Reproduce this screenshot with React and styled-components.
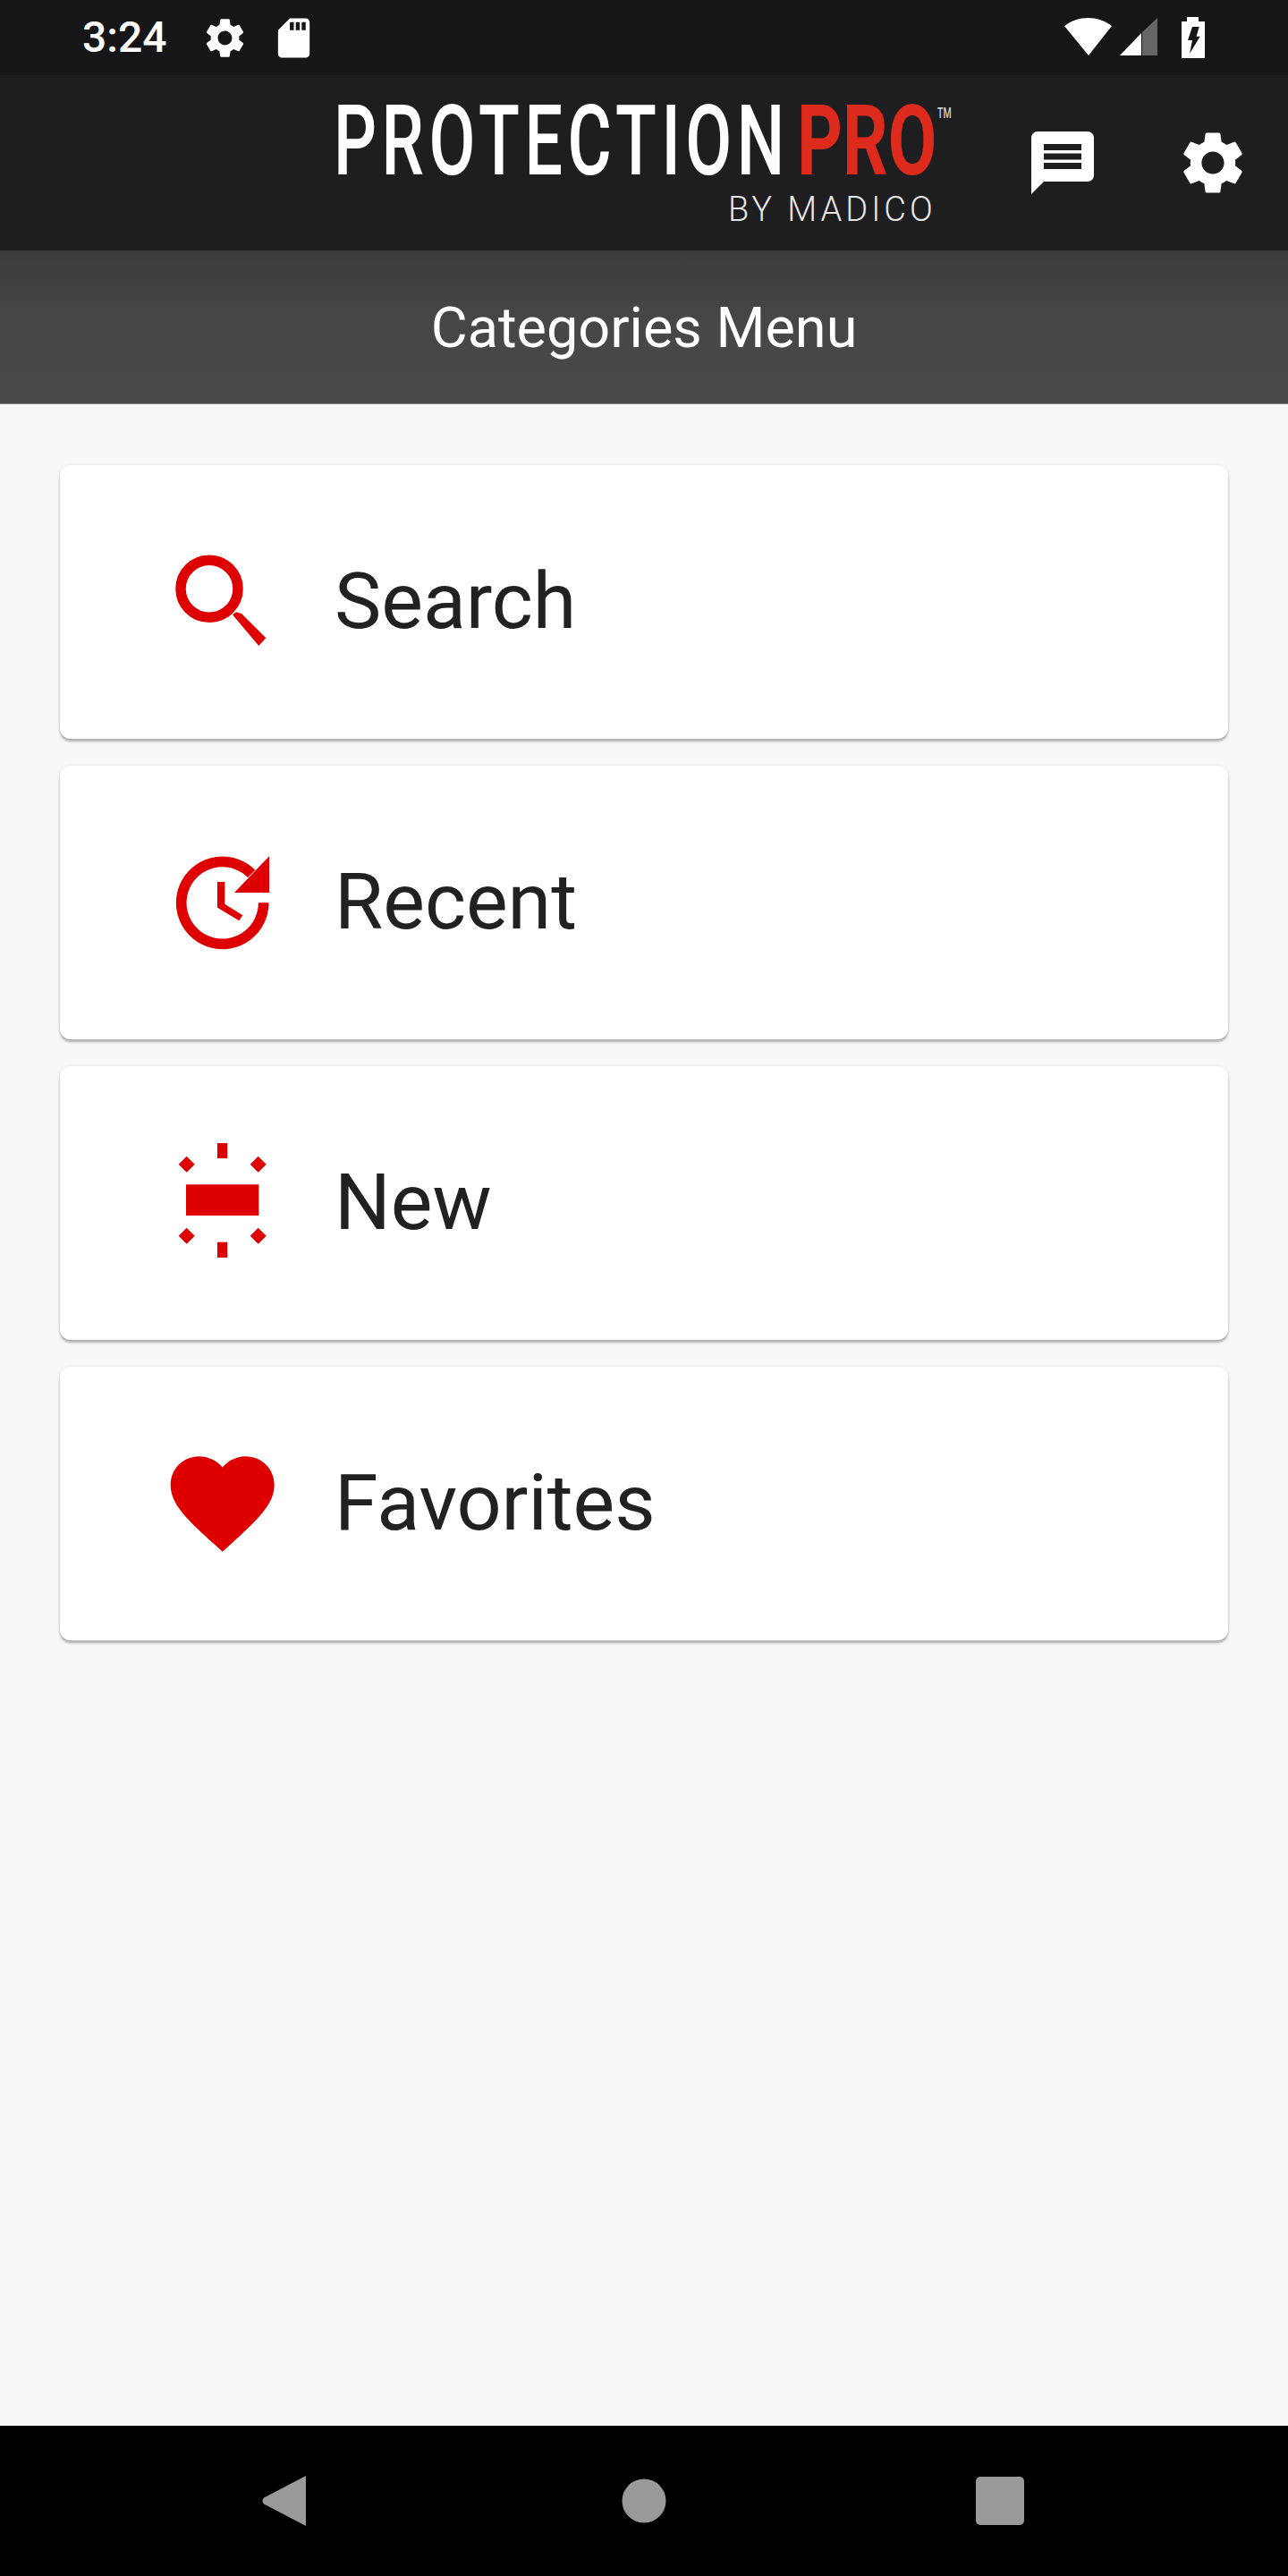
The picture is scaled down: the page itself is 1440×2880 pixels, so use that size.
import React from "react";
import styled, { createGlobalStyle } from "styled-components";

const GEAR =
  "M19.14 12.94c.04-.3.06-.61.06-.94 0-.32-.02-.64-.07-.94l2.03-1.58c.18-.14.23-.41.12-.61l-1.92-3.32c-.12-.22-.37-.29-.59-.22l-2.39.96c-.5-.38-1.03-.7-1.62-.94l-.36-2.54c-.04-.24-.24-.41-.48-.41h-3.84c-.24 0-.43.17-.47.41l-.36 2.54c-.59.24-1.13.57-1.62.94l-2.39-.96c-.22-.08-.47 0-.59.22L2.74 8.87c-.12.21-.08.47.12.61l2.03 1.58c-.05.3-.09.63-.09.94s.02.64.07.94l-2.03 1.58c-.18.14-.23.41-.12.61l1.92 3.32c.12.22.37.29.59.22l2.39-.96c.5.38 1.03.7 1.62.94l.36 2.54c.05.24.24.41.48.41h3.84c.24 0 .44-.17.47-.41l.36-2.54c.59-.24 1.13-.56 1.62-.94l2.39.96c.22.08.47 0 .59-.22l1.92-3.32c.12-.22.07-.47-.12-.61l-2.01-1.58zM12 15.6c-1.98 0-3.6-1.62-3.6-3.6s1.62-3.6 3.6-3.6 3.6 1.62 3.6 3.6-1.62 3.6-3.6 3.6z";
const MESSAGE =
  "M20 2H4c-1.1 0-1.99.9-1.99 2L2 22l4-4h14c1.1 0 2-.9 2-2V4c0-1.1-.9-2-2-2zm-2 12H6v-2h12v2zm0-3H6V9h12v2zm0-3H6V6h12v2z";
const SD_CARD =
  "M18 2h-8L4.02 8 4 20c0 1.1.9 2 2 2h12c1.1 0 2-.9 2-2V4c0-1.1-.9-2-2-2zm-6 6h-2V4h2v4zm3 0h-2V4h2v4zm3 0h-2V4h2v4z";
const HEART =
  "M12 21.35l-1.45-1.32C5.4 15.36 2 12.28 2 8.5 2 5.42 4.42 3 7.5 3c1.74 0 3.41.81 4.5 2.09C13.09 3.81 14.76 3 16.5 3 19.58 3 22 5.42 22 8.5c0 3.78-3.4 6.86-8.55 11.54L12 21.35z";

const RED = "#de0000";

const Global = createGlobalStyle`
  html, body {
    margin: 0;
    padding: 0;
    background: #f8f8f8;
    font-family: Roboto, "Liberation Sans", sans-serif;
  }
`;

const Page = styled.div`
  width: 1440px;
  height: 2880px;
  display: flex;
  flex-direction: column;
  background: #f8f8f8;
`;

const StatusBar = styled.div`
  height: 84px;
  flex: none;
  display: flex;
  align-items: center;
  background: #161618;
  padding: 0 93px 0 92px;
  box-sizing: border-box;
`;

const Clock = styled.span`
  font-size: 48px;
  font-weight: 500;
  color: #fff;
  line-height: 84px;
  width: 133px;
`;

const StatusIcon = styled.svg`
  display: block;
  flex: none;
  width: ${({ $w }) => $w || 53}px;
  height: ${({ $h }) => $h || 53}px;
  margin-left: ${({ $ml }) => $ml || 0}px;
  fill: #fff;
`;

const Spacer = styled.div`
  flex: 1;
`;

const Toolbar = styled.div`
  height: 196px;
  flex: none;
  display: flex;
  align-items: center;
  background: #1e1e20;
  padding-left: 370px;
  box-sizing: border-box;
`;

const LogoArt = styled.svg`
  display: block;
  flex: none;
  width: 700px;
  height: 140px;
  align-self: flex-start;
  margin-top: 26px;
  font-family: Roboto, sans-serif;
`;

const ToolIcon = styled.svg`
  display: block;
  flex: none;
  width: 84px;
  height: 84px;
  margin-left: ${({ $ml }) => $ml}px;
  fill: #fff;
`;

const TitleBar = styled.div`
  height: 172px;
  flex: none;
  display: flex;
  align-items: center;
  justify-content: center;
  box-sizing: border-box;
  padding-top: 2px;
  background: linear-gradient(#3c3c3c, #474747 50%, #484848);
  border-bottom: 1px solid #8a8a8a;
  color: #fff;
  font-size: 63px;
`;

const Menu = styled.main`
  flex: 1;
  display: flex;
  flex-direction: column;
  gap: 30px;
  padding: 68px 67px 0 67px;
`;

const Card = styled.div`
  height: 306px;
  display: flex;
  align-items: center;
  background: #fff;
  border-radius: 12px;
  box-shadow: 0 3px 3px rgba(0, 0, 0, 0.28), 0 0 4px rgba(0, 0, 0, 0.08);
  padding-left: 121px;
`;

const IconSlot = styled.svg`
  display: block;
  flex: none;
  width: 120px;
  height: 140px;
  fill: ${RED};
`;

const Label = styled.span`
  margin: 0 0 4px 66px;
  font-size: 88px;
  color: #212121;
`;

const NavBar = styled.div`
  height: 168px;
  flex: none;
  display: flex;
  align-items: center;
  justify-content: center;
  gap: 340px;
  background: #000;
`;

const NavKey = styled.svg`
  display: block;
  width: 60px;
  height: 60px;
  fill: #9a9a9a;
`;

const SearchIcon = () => (
  <IconSlot viewBox="0 -10 120 140">
    <circle cx="46" cy="45.3" r="32" fill="none" stroke={RED} strokeWidth="11.5" />
    <path d="M72 74.3L76 71.3 82 73 109.3 100.3 101.3 109z" />
  </IconSlot>
);

const RecentIcon = () => (
  <IconSlot viewBox="0 -10 120 140">
    <path
      d="M93.2 27.8A46 46 0 1 0 106.7 60.3"
      fill="none"
      stroke={RED}
      strokeWidth="11.7"
    />
    <path d="M113 8.3V49H74z" />
    <path d="M55 37H63.3V61.7L83.3 74.3 79.3 80.3 55 65.7z" />
  </IconSlot>
);

const NewIcon = () => (
  <IconSlot viewBox="0 -10 120 140">
    <rect x="20" y="39.3" width="81.3" height="34.7" />
    <rect x="55" y="-7" width="11.3" height="17" />
    <rect x="55" y="103.7" width="11.3" height="17.3" />
    <path d="M20.7 7.7l9 9-9 9-9-9z" />
    <path d="M100.7 7.7l9 9-9 9-9-9z" />
    <path d="M20.7 87.7l9 9-9 9-9-9z" />
    <path d="M100.7 87.7l9 9-9 9-9-9z" />
  </IconSlot>
);

const HeartIcon = () => (
  <IconSlot viewBox="0 -10 120 140">
    <path d={HEART} transform="translate(-8.9 -10.1) scale(5.8)" />
  </IconSlot>
);

const items = [
  { label: "Search", Icon: SearchIcon },
  { label: "Recent", Icon: RecentIcon },
  { label: "New", Icon: NewIcon },
  { label: "Favorites", Icon: HeartIcon },
];

const App = () => (
  <Page>
    <Global />
    <StatusBar>
      <Clock>3:24</Clock>
      <StatusIcon viewBox="0 0 24 24">
        <path d={GEAR} />
      </StatusIcon>
      <StatusIcon viewBox="0 0 24 24" $ml={24}>
        <path d={SD_CARD} />
      </StatusIcon>
      <Spacer />
      <StatusIcon viewBox="0 0 54 44" $w={54} $h={44}>
        <path d="M0 9C8 3 17 0 26.5 0S45 3 53 9L27 42z" />
      </StatusIcon>
      <StatusIcon viewBox="0 0 44 44" $w={44} $h={44} $ml={8}>
        <path d="M24 42H0L24 17z" />
        <path d="M25 16L42 0V42H25z" fill="#666" />
      </StatusIcon>
      <StatusIcon viewBox="0 0 26 46" $w={26} $h={46} $ml={25}>
        <path
          fillRule="evenodd"
          d="M6 0H19V5H26V46H0V5H6zM12 11H19.7L16.5 21.7H20.7L9 41 12 26H7z"
        />
      </StatusIcon>
    </StatusBar>
    <Toolbar>
      <LogoArt viewBox="0 0 700 140">
        <text
          transform="translate(3 85) scale(.685 1)"
          fontSize="110"
          fontWeight="500"
          fill="#fff"
          letterSpacing="8"
        >
          PROTECTION
        </text>
        <text
          transform="translate(521 85) scale(.72 1)"
          fontSize="110"
          fontWeight="700"
          fill="#dc2a1c"
        >
          PRO
        </text>
        <text
          transform="translate(678 22) scale(.62 1)"
          fontSize="17"
          fontWeight="500"
          fill="#cfcfcf"
        >
          TM
        </text>
        <text x="444" y="137" fontSize="38" fontWeight="300" fill="#e6e6e6" letterSpacing="4">
          BY MADICO
        </text>
      </LogoArt>
      <ToolIcon viewBox="0 0 24 24" $ml={76}>
        <path d={MESSAGE} />
      </ToolIcon>
      <ToolIcon viewBox="0 0 24 24" $ml={84}>
        <path d={GEAR} />
      </ToolIcon>
    </Toolbar>
    <TitleBar>Categories Menu</TitleBar>
    <Menu>
      {items.map(({ label, Icon }) => (
        <Card key={label}>
          <Icon />
          <Label>{label}</Label>
        </Card>
      ))}
    </Menu>
    <NavBar>
      <NavKey viewBox="0 0 60 60">
        <path d="M5 26.5Q2 30 5 33.5L52 58V2z" />
      </NavKey>
      <NavKey viewBox="0 0 60 60">
        <circle cx="30" cy="30" r="24.5" />
      </NavKey>
      <NavKey viewBox="0 0 60 60">
        <rect x="1" y="3" width="54" height="54" rx="5" />
      </NavKey>
    </NavBar>
  </Page>
);

export default App;
